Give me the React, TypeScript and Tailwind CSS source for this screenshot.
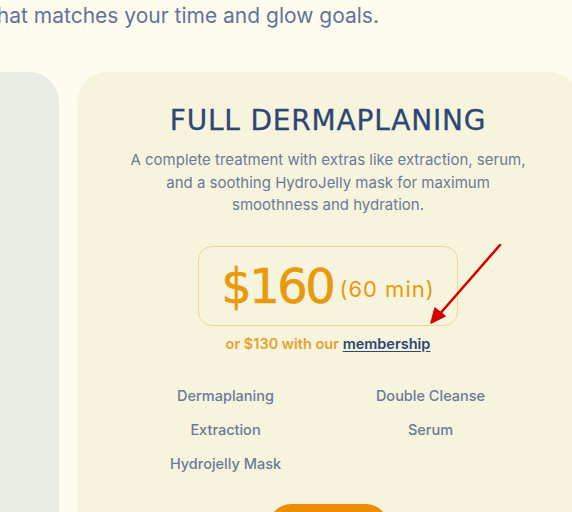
import React from "react";

const features = ["Dermaplaning", "Double Cleanse", "Extraction", "Serum", "Hydrojelly Mask"];

export default function App() {
  return (
    <div className="relative w-[572px] h-[512px] overflow-hidden bg-[#fefcee]" style={{ fontFamily: "Inter, 'Noto Sans', sans-serif" }}>
      <p className="ml-[-10px] pt-[1px] text-[21px] leading-[30px] text-[#62739a] whitespace-nowrap">
        that matches your time and glow goals.
      </p>
      <div className="mt-[41px] flex gap-[18px] ml-[-60px]">
        <div className="w-[119px] shrink-0 h-[480px] rounded-[30px] bg-[#e9ece5]"></div>
        <div className="w-[502px] shrink-0 h-[480px] rounded-[30px] bg-[#f6f4dc] px-[46px] pt-[32px] flex flex-col items-center">
          <h2
            className="text-[28px] leading-[34px] text-[#2e4675] tracking-[0.8px] whitespace-nowrap [-webkit-text-stroke:0.3px_#2e4675]"
            style={{ fontFamily: "'DejaVu Sans', sans-serif" }}
          >
            FULL DERMAPLANING
          </h2>
          <p className="mt-[11px] text-center text-[15px] leading-[22.5px] text-[#6b7a9b]">
            A complete treatment with extras like extraction, serum, and a soothing HydroJelly mask for maximum smoothness and hydration.
          </p>
          <div className="mt-[29px] w-[260px] h-[80px] rounded-[14px] border-[1.5px] border-[#f4d690] flex items-center justify-center gap-[6px]">
            <span
              className="text-[48px] leading-[56px] text-[#e8990c] tracking-[-2.5px] [-webkit-text-stroke:0.6px_#e8990c]"
              style={{ fontFamily: "'DejaVu Sans', sans-serif" }}
            >
              $160
            </span>
            <span className="mt-[6px] text-[22px] leading-[28px] text-[#e8990c] tracking-[1px]">(60 min)</span>
          </div>
          <p className="mt-[8px] text-[14.5px] leading-[20px] font-semibold text-[#eba030]">
            or $130 with our{" "}
            <span className="text-[#2e4675] underline underline-offset-2">membership</span>
          </p>
          <div className="mt-[32px] w-full grid grid-cols-2 gap-y-[14px]">
            {features.map((f) => (
              <div key={f} className="text-center text-[14.5px] leading-[20px] font-medium text-[#6b7a9b]">
                {f}
              </div>
            ))}
          </div>
          <div className="mt-[30px] w-[119px] h-[44px] rounded-full bg-[#ef8c00]"></div>
        </div>
      </div>
      <svg className="absolute left-0 top-0 pointer-events-none" width="572" height="512">
        <line x1="500" y1="245" x2="438" y2="316" stroke="#d40000" strokeWidth="2.5" strokeLinecap="round" />
        <path d="M431 323 L435 308 L445 316 Z" fill="#d40000" stroke="#d40000" strokeWidth="1.5" strokeLinejoin="round" />
      </svg>
    </div>
  );
}
